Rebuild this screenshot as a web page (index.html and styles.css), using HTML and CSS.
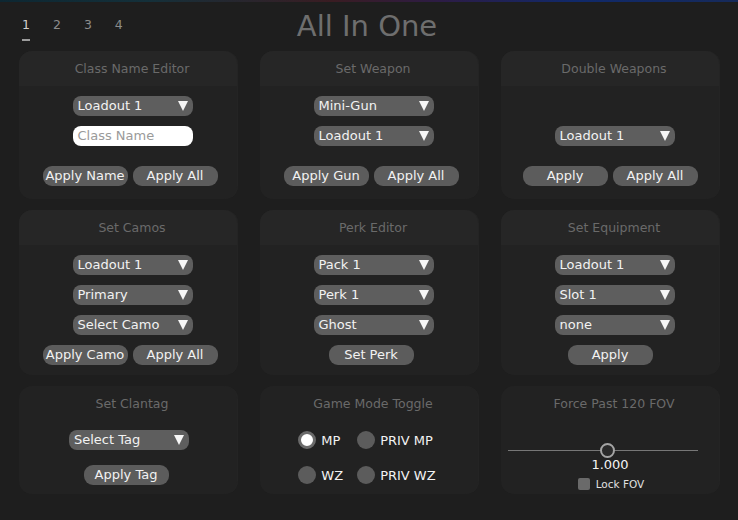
FILE: index.html
```html
<!DOCTYPE html>
<html>
<head>
<meta charset="utf-8">
<link rel="stylesheet" href="styles.css">
</head>
<body>
<div class="topline"></div>
<header class="header">
  <nav class="tabs">
    <span class="tab active">1</span>
    <span class="tab">2</span>
    <span class="tab">3</span>
    <span class="tab">4</span>
  </nav>
  <h1 class="title">All In One</h1>
  <div></div>
</header>
<main class="grid">
  <section class="panel">
    <div class="panel-head">Class Name Editor</div>
    <div class="panel-body">
      <div class="select">Loadout 1<span class="arrow"></span></div>
      <div class="input">Class Name</div>
      <div class="btns spaced">
        <span class="btn">Apply Name</span><span class="btn">Apply All</span>
      </div>
    </div>
  </section>
  <section class="panel">
    <div class="panel-head">Set Weapon</div>
    <div class="panel-body">
      <div class="select">Mini-Gun<span class="arrow"></span></div>
      <div class="select">Loadout 1<span class="arrow"></span></div>
      <div class="btns spaced">
        <span class="btn">Apply Gun</span><span class="btn">Apply All</span>
      </div>
    </div>
  </section>
  <section class="panel">
    <div class="panel-head">Double Weapons</div>
    <div class="panel-body">
      <div class="empty"></div>
      <div class="select">Loadout 1<span class="arrow"></span></div>
      <div class="btns spaced shift-left">
        <span class="btn">Apply</span><span class="btn">Apply All</span>
      </div>
    </div>
  </section>

  <section class="panel">
    <div class="panel-head">Set Camos</div>
    <div class="panel-body">
      <div class="select">Loadout 1<span class="arrow"></span></div>
      <div class="select">Primary<span class="arrow"></span></div>
      <div class="select">Select Camo<span class="arrow"></span></div>
      <div class="btns">
        <span class="btn">Apply Camo</span><span class="btn">Apply All</span>
      </div>
    </div>
  </section>
  <section class="panel">
    <div class="panel-head">Perk Editor</div>
    <div class="panel-body">
      <div class="select">Pack 1<span class="arrow"></span></div>
      <div class="select">Perk 1<span class="arrow"></span></div>
      <div class="select">Ghost<span class="arrow"></span></div>
      <div class="btns">
        <span class="btn">Set Perk</span>
      </div>
    </div>
  </section>
  <section class="panel">
    <div class="panel-head">Set Equipment</div>
    <div class="panel-body">
      <div class="select">Loadout 1<span class="arrow"></span></div>
      <div class="select">Slot 1<span class="arrow"></span></div>
      <div class="select">none<span class="arrow"></span></div>
      <div class="btns shift-left">
        <span class="btn">Apply</span>
      </div>
    </div>
  </section>

  <section class="panel flat">
    <div class="panel-head">Set Clantag</div>
    <div class="panel-body loose">
      <div class="select tag">Select Tag<span class="arrow"></span></div>
      <div class="btns tagbtn">
        <span class="btn">Apply Tag</span>
      </div>
    </div>
  </section>
  <section class="panel flat">
    <div class="panel-head">Game Mode Toggle</div>
    <div class="panel-body">
      <div class="radios">
        <label class="radio"><span class="dot on"></span>MP</label>
        <label class="radio"><span class="dot"></span>PRIV MP</label>
        <label class="radio"><span class="dot"></span>WZ</label>
        <label class="radio"><span class="dot"></span>PRIV WZ</label>
      </div>
    </div>
  </section>
  <section class="panel flat">
    <div class="panel-head">Force Past 120 FOV</div>
    <div class="panel-body fov">
      <div class="slider"><span class="knob" style="left: 52%"></span></div>
      <div class="value">1.000</div>
      <label class="check"><span class="box"></span>Lock FOV</label>
    </div>
  </section>
</main>
</body>
</html>
```

FILE: styles.css
```css
* { box-sizing: border-box; }
html, body {
  margin: 0;
  padding: 0;
  background: #1e1e1e;
  width: 738px;
  height: 520px;
  overflow: hidden;
  font-family: "DejaVu Sans", sans-serif;
}
.topline {
  height: 2px;
  background: linear-gradient(90deg, #0d2732 0%, #14303a 20%, #3a1c22 45%, #2c1c46 60%, #10296a 78%, #162a5a 100%);
}
.header {
  display: grid;
  grid-template-columns: 1fr auto 1fr;
  align-items: start;
  height: 49px;
}
.tabs {
  display: flex;
  gap: 23px;
  padding: 15px 0 0 22px;
}
.tab {
  font-size: 12.5px;
  color: #8c8c8c;
  line-height: 16px;
  padding-bottom: 6px;
}
.tab.active {
  color: #cfcfcf;
  border-bottom: 2px solid #9c9c9c;
}
.title {
  margin: 6px 0 0 -4px;
  font-size: 29px;
  font-weight: normal;
  color: #6e6e6e;
  line-height: 36px;
}
.grid {
  display: grid;
  grid-template-columns: repeat(3, 218px);
  grid-template-rows: 148px 165px 108px;
  column-gap: 23px;
  row-gap: 11px;
  padding-left: 19px;
}
.panel {
  background: #222222;
  border-radius: 13px;
  overflow: hidden;
  box-shadow: 1px 0 0 #242424;
}
.panel-head {
  height: 35px;
  background: #262626;
  color: #6a6a6a;
  font-size: 12.5px;
  display: flex;
  align-items: center;
  justify-content: center;
  padding-left: 8px;
}
.panel.flat .panel-head {
  background: transparent;
}
.panel-body {
  display: flex;
  flex-direction: column;
  align-items: center;
  gap: 10px;
  padding-top: 10px;
}
.select, .input {
  width: 120px;
  height: 20px;
  border-radius: 8px;
  margin-left: 9px;
  font-size: 13px;
  line-height: 20px;
  padding-left: 5px;
}
.select {
  background: #5e5e5e;
  color: #f2f2f2;
  display: flex;
  align-items: center;
  justify-content: space-between;
  padding-right: 5px;
}
.arrow {
  width: 0;
  height: 0;
  border-left: 5.5px solid transparent;
  border-right: 5.5px solid transparent;
  border-top: 10px solid #f6f6f6;
}
.input {
  background: #ffffff;
  color: #9a9a9a;
}
.empty { height: 20px; }
.btns {
  display: flex;
  gap: 5px;
  margin-left: 4px;
}
.btns.shift-left { margin-left: 0; }
.btns.spaced { margin-top: 10px; }
.btn {
  width: 85px;
  height: 20px;
  border-radius: 9px;
  background: #5c5c5c;
  color: #f2f2f2;
  font-size: 13px;
  line-height: 20px;
  text-align: center;
}
.loose { gap: 15px; padding-top: 9px; }
.tag { margin-left: 2px; }
.tagbtn { margin-left: -4px; }
.radios {
  display: grid;
  grid-template-columns: auto auto;
  column-gap: 14px;
  row-gap: 15px;
  margin-left: -4px;
  margin-top: -1px;
}
.radio {
  display: flex;
  align-items: center;
  gap: 5px;
  height: 20px;
  font-size: 13px;
  color: #f2f2f2;
}
.dot {
  width: 18px;
  height: 18px;
  border-radius: 50%;
  background: #5c5c5c;
}
.dot.on {
  background: #ffffff;
  border: 3px solid #6a6a6a;
}
.fov {
  gap: 0;
  padding-top: 29px;
}
.slider {
  position: relative;
  width: 190px;
  height: 1px;
  margin-left: -14px;
  background: #777777;
}
.knob {
  position: absolute;
  top: -7px;
  width: 15px;
  height: 15px;
  margin-left: -7px;
  border-radius: 50%;
  border: 2px solid #a4a4a4;
  background: #2a2a2a;
}
.value {
  margin-top: 6px;
  font-size: 13px;
  line-height: 16px;
  color: #f4f4f4;
  margin-left: 0;
}
.check {
  display: flex;
  align-items: center;
  gap: 6px;
  margin-top: 5px;
  font-size: 10.5px;
  color: #e0e0e0;
  margin-left: 2px;
}
.box {
  width: 12px;
  height: 12px;
  border-radius: 2px;
  background: #6a6a6a;
}
```
